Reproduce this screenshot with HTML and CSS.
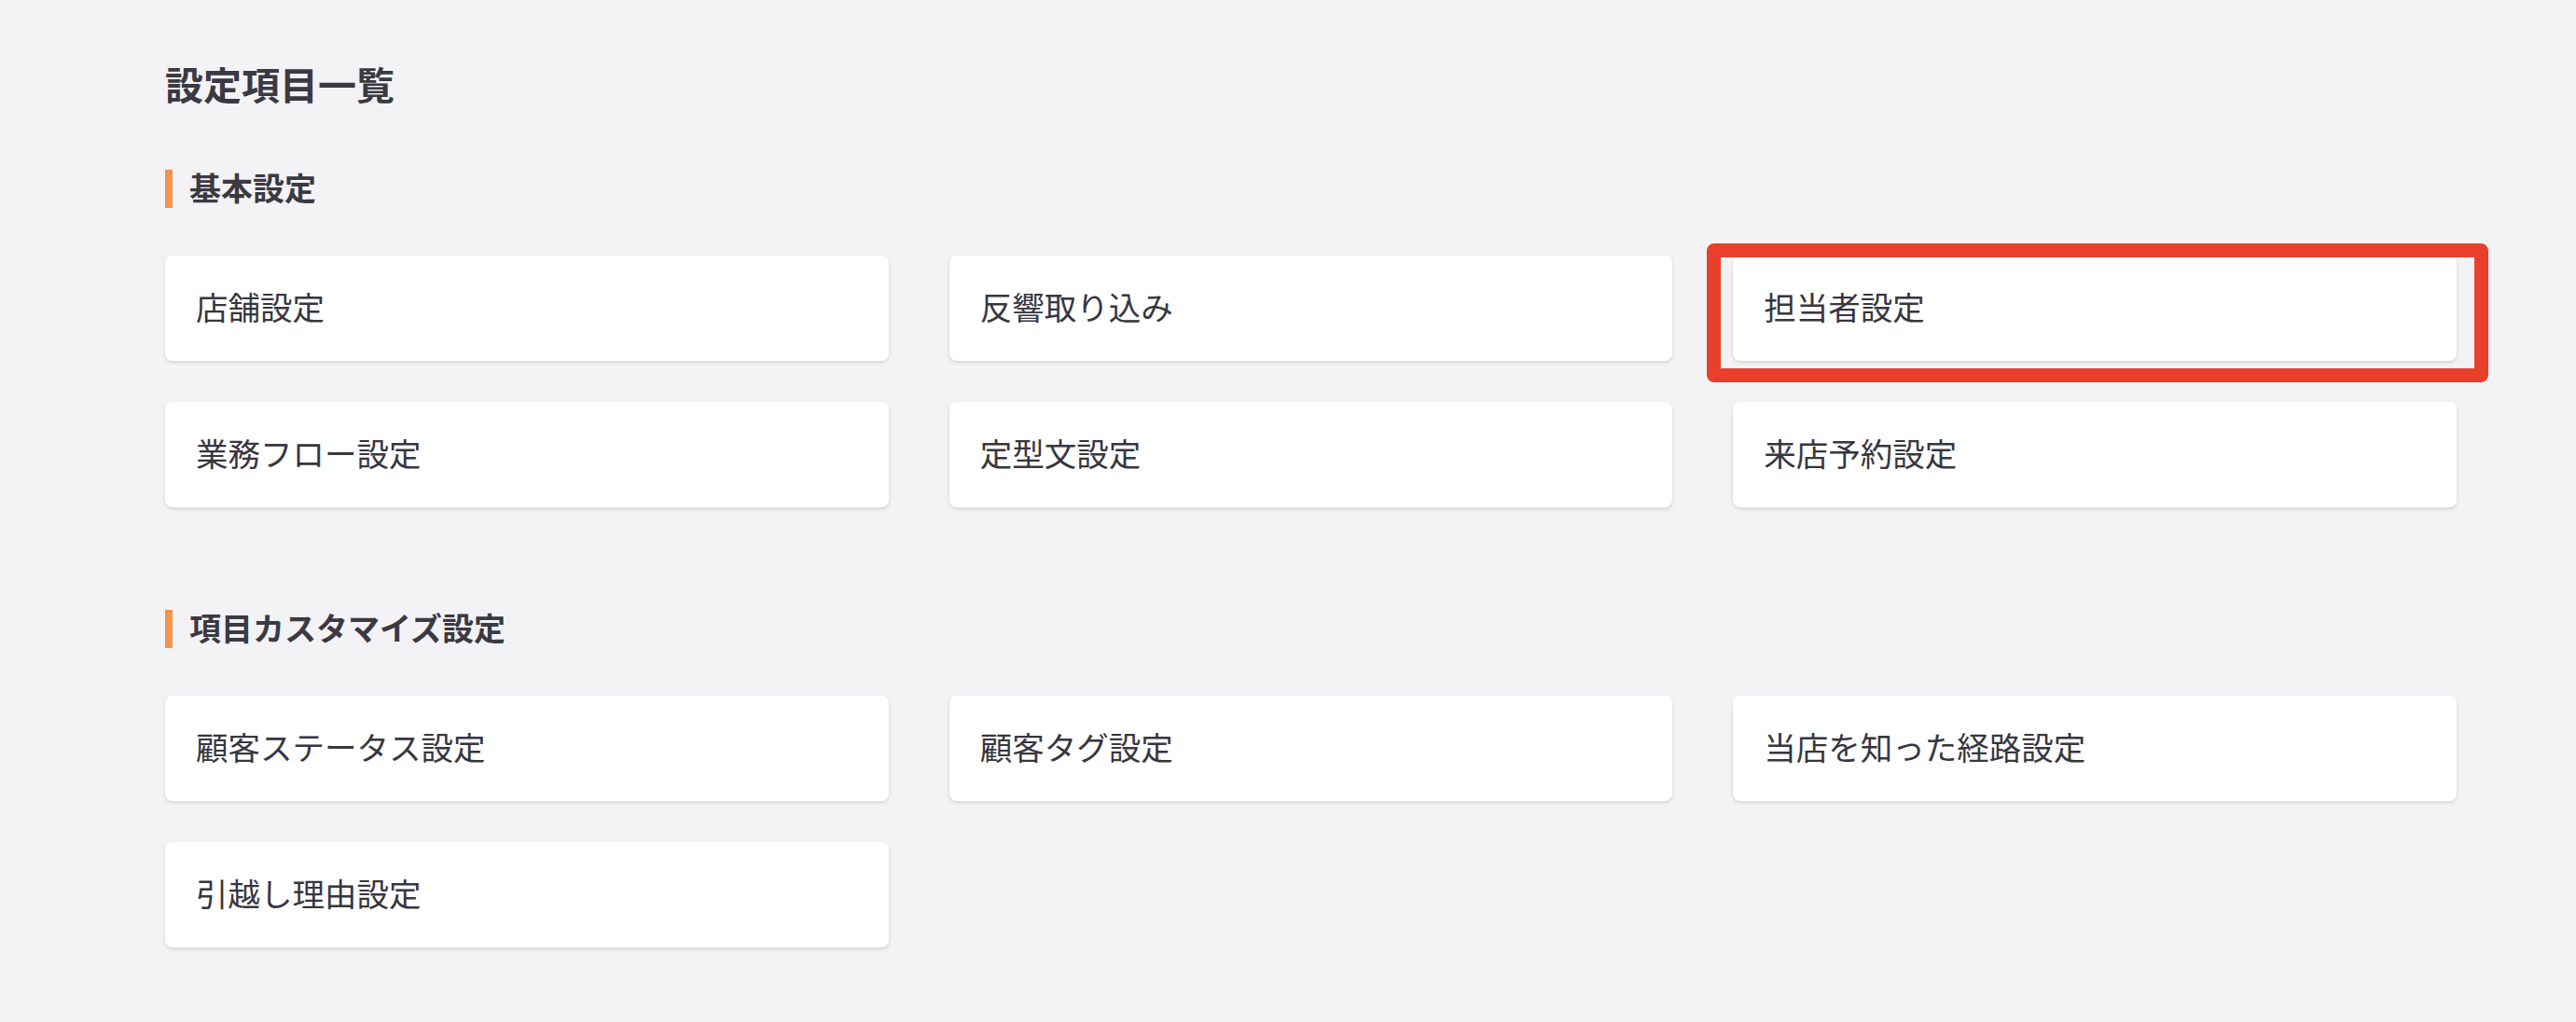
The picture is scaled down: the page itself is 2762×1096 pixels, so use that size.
FILE: index.html
```html
<!DOCTYPE html>
<html lang="ja">
<head>
<meta charset="utf-8">
<title>設定項目一覧</title>
<link rel="stylesheet" href="styles.css">
</head>
<body>
<main class="page">
  <h1 class="page-title">設定項目一覧</h1>

  <section class="group">
    <h2 class="group-title">基本設定</h2>
    <div class="card-grid">
      <a class="card">店舗設定</a>
      <a class="card">反響取り込み</a>
      <a class="card card--highlight">担当者設定<span class="highlight-frame"></span></a>
      <a class="card">業務フロー設定</a>
      <a class="card">定型文設定</a>
      <a class="card">来店予約設定</a>
    </div>
  </section>

  <section class="group group--second">
    <h2 class="group-title">項目カスタマイズ設定</h2>
    <div class="card-grid">
      <a class="card">顧客ステータス設定</a>
      <a class="card">顧客タグ設定</a>
      <a class="card">当店を知った経路設定</a>
      <a class="card">引越し理由設定</a>
    </div>
  </section>
</main>
</body>
</html>
```

FILE: styles.css
```css
* { box-sizing: border-box; }

html, body {
  margin: 0;
  padding: 0;
  background: #f3f3f6;
}

body {
  font-family: "Noto Sans CJK JP", "Noto Sans", sans-serif;
  color: #38363f;
}

.page {
  width: 2634px;
  padding: 65px 0 80px 177px;
}

.page-title {
  margin: 0;
  font-size: 41px;
  line-height: 48px;
  height: 48px;
  font-weight: 700;
  color: #3b3942;
}

.group {
  margin-top: 69px;
}

.group--second {
  margin-top: 110px;
}

.group-title {
  margin: 0;
  height: 41px;
  line-height: 41px;
  padding-bottom: 4px;
  font-size: 34px;
  font-weight: 700;
  color: #3b3942;
  border-left: 8px solid #f2944c;
  padding-left: 18px;
  display: flex;
  align-items: center;
}

.card-grid {
  margin-top: 51px;
  display: grid;
  grid-template-columns: repeat(3, 1fr);
  column-gap: 65px;
  row-gap: 44px;
}

.card {
  position: relative;
  display: flex;
  align-items: center;
  height: 113px;
  padding-left: 33px;
  padding-bottom: 6px;
  background: #ffffff;
  border-radius: 8px;
  box-shadow: 0 2px 4px rgba(0, 0, 0, 0.13);
  font-size: 34.5px;
  color: #38363f;
  text-decoration: none;
}

.highlight-frame {
  position: absolute;
  left: -28px;
  top: -13px;
  right: -34px;
  bottom: -23px;
  border: 15px solid #e8402a;
  border-radius: 8px;
  pointer-events: none;
}
```
